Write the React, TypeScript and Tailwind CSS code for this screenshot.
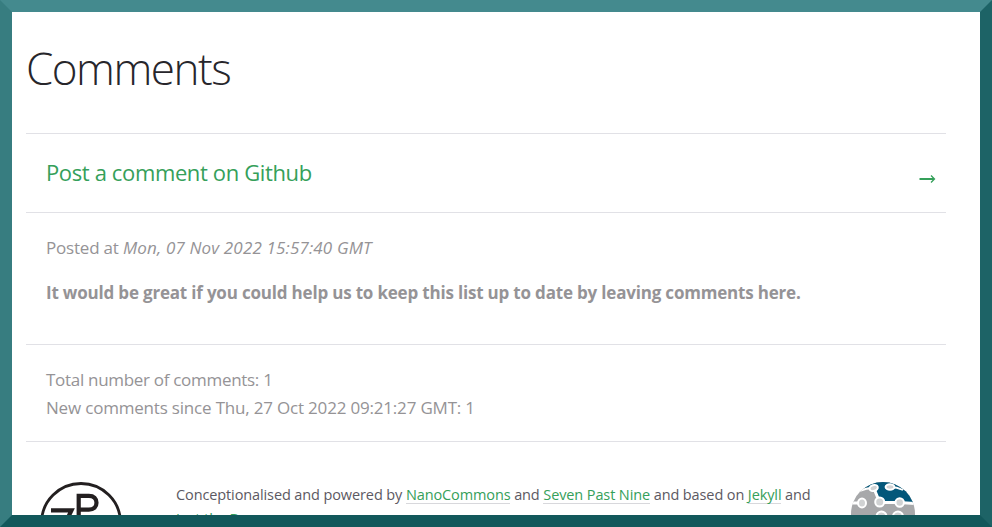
import React from "react";

function FooterLink({ children }: { children: React.ReactNode }) {
  return <a className="inline-block h-[19px] border-b border-[#d8d8dc] leading-[20px] text-[#35a05a]">{children}</a>;
}

function SevenPastNineLogo() {
  return (
    <svg className="h-[82px] w-[82px] shrink-0" viewBox="0 0 82 82" fill="none" stroke="#231f20">
      <circle cx="41" cy="41" r="39.5" strokeWidth="2.8" />
      <path d="M38.7 34V13.800h10.200c5 0 7.600 2.700 7.600 6.900s-2.600 6.900-7.600 6.900H38.700" strokeWidth="4.200" />
      <path d="M11 28.300h20.500L22 48" strokeWidth="4.200" />
    </svg>
  );
}

function NanoCommonsLogo() {
  return (
    <svg className="h-[64px] w-[64px] shrink-0" viewBox="0 0 64 64">
      <defs>
        <clipPath id="globe">
          <circle cx="32" cy="32" r="32" />
        </clipPath>
      </defs>
      <g clipPath="url(#globe)">
        <rect width="64" height="64" fill="#a7a8aa" />
        <path d="M10 7L20 -1H48L66 12V21H29L26 12L20 5Z" fill="#03577a" />
        <path d="M-2 21H11M28.500 20.500H48L66 21.500M23 6.500L28.500 20" fill="none" stroke="#fff" strokeWidth="3" />
        <path d="M22.500 6C17 6 13 7 9 9M39 5C45 5 48 6 52 8" fill="none" stroke="#fff" strokeWidth="1.800" />
        <g fill="#d0d2d3" stroke="#fff" strokeWidth="2">
          <ellipse cx="22.700" cy="6" rx="4.200" ry="2.900" transform="rotate(-18 22.700 6)" />
          <ellipse cx="39" cy="5" rx="4.400" ry="2.700" />
          <ellipse cx="11" cy="21" rx="4" ry="4.500" />
          <circle cx="28.700" cy="20" r="4.500" />
          <circle cx="48.700" cy="20.500" r="4.200" />
          <circle cx="30.500" cy="34.500" r="5" />
          <circle cx="47" cy="34.500" r="5" />
        </g>
      </g>
    </svg>
  );
}

export default function App() {
  return (
    <div className="h-[527px] w-[992px] overflow-hidden border-[12px] border-t-[#448a8e] border-r-[#1d6366] border-b-[#12585b] border-l-[#377d80] bg-white pr-[34px] pl-[14px] font-['Open_Sans','Noto_Sans',sans-serif] whitespace-nowrap">
      <h1 className="h-[121px] pt-[23px] text-[44px] leading-[66px] font-light text-[#27262b]">
        <span className="tracking-[-1.5px]">Comments</span>
      </h1>
      <section className="border-t border-[#e1e1e6] text-[17px] text-[#959396]">
        <div className="flex h-[78px] items-center justify-between pr-[10px] pb-[2px] pl-[20px] text-[22px] text-[#35a05a]">
          <a className="tracking-[-0.37px]">Post a comment on Github</a>
          <svg className="mt-[13px] h-[10px] w-[17px]" viewBox="0 0 17 10" fill="none" stroke="currentColor">
            <path d="M0.500 5H15" strokeWidth="2" />
            <path d="M12 1.500L15.500 5L12 8.500" strokeWidth="1.300" />
          </svg>
        </div>
        <article className="h-[132px] border-t border-[#e1e1e6] pt-[21px] pl-[20px] leading-[28px]">
          <p className="h-[45px]">
            <span className="tracking-[-0.2px]">Posted at </span>
            <em className="tracking-[0.15px]">Mon, 07 Nov 2022 15:57:40 GMT</em>
          </p>
          <p className="font-bold"><span className="tracking-[-0.19px]">It would be great if you could help us to keep this list up to date by leaving comments here.</span></p>
        </article>
        <div className="h-[98px] border-y border-[#e1e1e6] pt-[21px] pl-[20px] leading-[28px]">
          <p><span className="tracking-[-0.3px]">Total number of comments: 1</span></p>
          <p><span className="tracking-[-0.19px]">New comments since Thu, 27 Oct 2022 09:21:27 GMT: 1</span></p>
        </div>
      </section>
      <footer className="flex pt-[40px] pl-[14px]">
        <SevenPastNineLogo />
        <p className="mt-px ml-[54px] w-[675px] text-[14.5px] leading-[24px] tracking-[-0.11px] text-[#5c5962]">
          Conceptionalised and powered by <FooterLink>NanoCommons</FooterLink> and <FooterLink>Seven Past Nine</FooterLink> and based on <FooterLink>Jekyll</FooterLink> and
          <br />
          <FooterLink>Just the Docs</FooterLink>.
        </p>
        <NanoCommonsLogo />
      </footer>
    </div>
  );
}
